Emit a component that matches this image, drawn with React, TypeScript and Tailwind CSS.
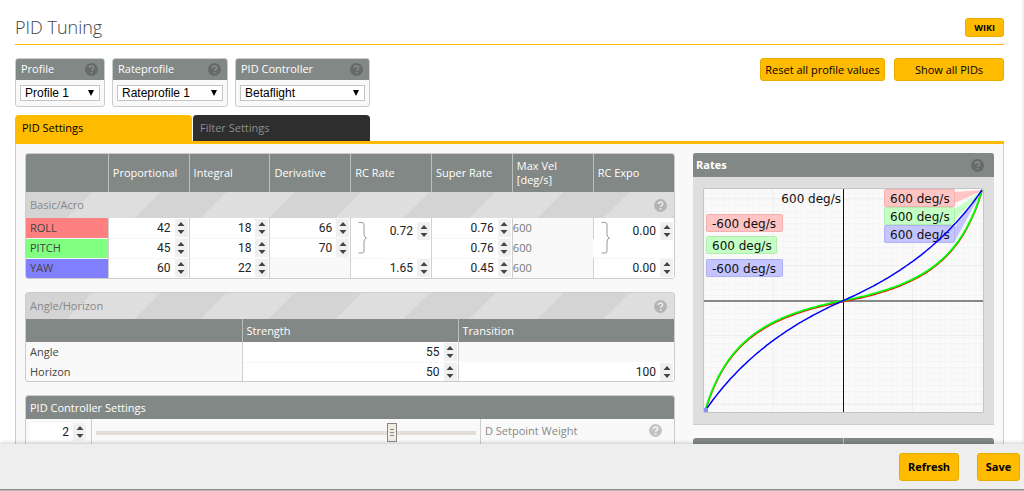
import React from "react";

const cell = "border-r border-[#d0d0d0] last:border-r-0 p-0";
const headCell = "border-r border-[#bdc1be] last:border-r-0 px-1 text-left font-medium text-white align-middle";

function Help({ tone = "text-[#b4b4b4]", mark = "#ececec" }: { tone?: string; mark?: string }) {
  return (
    <button type="button" aria-label="Help" className={"size-[13px] shrink-0 " + tone}>
      <svg viewBox="0 0 12 12" className="size-[13px]">
        <circle cx="6" cy="6" r="6" fill="currentColor" />
        <path d="M4.1 4.7c0-2.6 3.9-2.5 3.9-.2 0 1.3-1.9 1.4-1.9 2.7" fill="none" stroke={mark} strokeWidth="1.4" />
        <circle cx="6.1" cy="9.1" r=".9" fill={mark} />
      </svg>
    </button>
  );
}

function NumberField({ label, value, step = "1" }: { label: string; value: string; step?: string }) {
  return (
    <div className="flex h-[18px] min-w-0 flex-1 bg-white pr-px">
      <input
        type="number"
        aria-label={label}
        defaultValue={value}
        step={step}
        className="w-full min-w-0 flex-1 bg-transparent pr-1 text-right font-[Roboto,sans-serif] text-[12px] leading-[18px] text-[#222] outline-none [appearance:textfield] [&::-webkit-inner-spin-button]:appearance-none"
      />
      <span className="flex w-[13px] items-center justify-center bg-[#f0f0f0]">
        <svg viewBox="0 0 8 14" className="h-[14px] w-2" fill="#444">
          <path d="M4 1 7.500 5H.5zM4 13 .5 9h7z" />
        </svg>
      </span>
    </div>
  );
}

function Brace() {
  return (
    <svg viewBox="0 0 9 32" className="h-8 w-[9px] shrink-0" fill="none" stroke="#999" strokeWidth="1">
      <path d="M.5 .5H4q2 0 2 2v9.500q0 3.500 2.500 4Q6 16.500 6 20v9q0 2-2 2H.5" />
    </svg>
  );
}

function Picker({ id, label, option, width }: { id: string; label: string; option: string; width: string }) {
  return (
    <div className={"overflow-hidden rounded-[3px] border border-[#ccc] bg-[#f9f9f9] " + width}>
      <div className="flex h-[21px] items-center justify-between bg-[#828885] pl-[5px] pr-[6px] text-white">
        <label htmlFor={id} className="pb-[2px] font-medium">{label}</label>
        <Help tone="text-[#666b68]" mark="#8b908d" />
      </div>
      <div className="relative px-1 py-[5px]">
        <select
          id={id}
          className="block h-4 w-full appearance-none border border-[#c4c4c4] bg-white pl-1 font-[Liberation_Sans,Arial,sans-serif] text-[12px] leading-[14px] text-black"
        >
          <option>{option}</option>
        </select>
        <svg viewBox="0 0 6 6" className="pointer-events-none absolute right-[10px] top-[10px] size-[6px]">
          <path d="M0 0h6L3 6z" fill="#000" />
        </svg>
      </div>
    </div>
  );
}

const yellowButton = "rounded-[3px] border border-[#e8ab00] bg-[#ffbb00] text-black";

function StripeCell({ title, span }: { title: string; span: number }) {
  return (
    <th
      colSpan={span}
      className="h-[26px] bg-[repeating-linear-gradient(135deg,#d4d4d4_0px,#d4d4d4_47px,#dedede_47px,#dedede_95px)] p-0 pl-1 pr-[7px] text-left font-normal text-[#888]"
    >
      <div className="flex items-center justify-between">
        <span>{title}</span>
        <Help />
      </div>
    </th>
  );
}

const pidRows = [
  { name: "ROLL", color: "bg-[#ff8080]", p: "42", i: "18", d: "66", rate: "0.72", sup: "0.76", expo: "0.00", span: 2 },
  { name: "PITCH", color: "bg-[#80ff80]", p: "45", i: "18", d: "70", rate: "", sup: "0.76", expo: "", span: 0 },
  { name: "YAW", color: "bg-[#8080ff]", p: "60", i: "22", d: "", rate: "1.65", sup: "0.45", expo: "0.00", span: 1 },
];

function RateCell({ row, label, value }: { row: { name: string; span: number }; label: string; value: string }) {
  if (row.span === 0) return null;
  return (
    <td rowSpan={row.span} className={cell + " bg-white align-top"}>
      <div className={row.span === 2 ? "flex gap-1 pl-[7px] pt-1" : "flex"}>
        {row.span === 2 && <Brace />}
        <NumberField label={row.name + " " + label} value={value} step="0.01" />
      </div>
    </td>
  );
}

function PidTable() {
  return (
    <div className="overflow-hidden rounded-[3px] border border-[#ccc]">
      <table className="w-full table-fixed border-collapse">
        <colgroup>
          <col className="w-[12.7%]" />
          <col /><col /><col /><col /><col /><col /><col />
        </colgroup>
        <thead>
          <tr className="h-[38px] bg-[#828885]">
            {["", "Proportional", "Integral", "Derivative", "RC Rate", "Super Rate", "Max Vel [deg/s]", "RC Expo"].map((h) => (
              <th key={h} className={headCell}>{h}</th>
            ))}
          </tr>
          <tr><StripeCell title="Basic/Acro" span={8} /></tr>
        </thead>
        <tbody>
          {pidRows.map((r) => (
            <tr key={r.name} className="h-5 border-b border-[#f6f6f6] last:border-b-0">
              <th className={"border-r border-[#d0d0d0] p-0 pl-1 text-left font-normal text-[#444] " + r.color}>{r.name}</th>
              <td className={cell + " bg-white"}><NumberField label={r.name + " proportional"} value={r.p} /></td>
              <td className={cell + " bg-white"}><NumberField label={r.name + " integral"} value={r.i} /></td>
              <td className={cell}>{r.d && <NumberField label={r.name + " derivative"} value={r.d} />}</td>
              <RateCell row={r} label="RC rate" value={r.rate} />
              <td className={cell + " bg-white"}><NumberField label={r.name + " super rate"} value={r.sup} step="0.01" /></td>
              <td className={cell + " text-[#777]"}>600</td>
              <RateCell row={r} label="RC expo" value={r.expo} />
            </tr>
          ))}
        </tbody>
      </table>
    </div>
  );
}

function AngleTable() {
  return (
    <div className="overflow-hidden rounded-[3px] border border-[#ccc]">
      <table className="w-full table-fixed border-collapse">
        <thead>
          <tr><StripeCell title="Angle/Horizon" span={3} /></tr>
          <tr className="h-[23px] bg-[#828885]">
            <th className={headCell} />
            <th className={headCell}>Strength</th>
            <th className={headCell}>Transition</th>
          </tr>
        </thead>
        <tbody>
          <tr className="h-5">
            <th className={cell + " pl-1 text-left font-normal"}>Angle</th>
            <td className={cell + " border-b border-b-[#f6f6f6] bg-white"}><NumberField label="Angle strength" value="55" /></td>
            <td className={cell} />
          </tr>
          <tr className="h-[19px]">
            <th className={cell + " pl-1 text-left font-normal"}>Horizon</th>
            <td className={cell + " bg-white"}><NumberField label="Horizon strength" value="50" /></td>
            <td className={cell + " bg-white"}><NumberField label="Horizon transition" value="100" /></td>
          </tr>
        </tbody>
      </table>
    </div>
  );
}

function ControllerSettings() {
  return (
    <div className="overflow-hidden rounded-[3px] border border-[#ccc]">
      <h2 className="flex h-[23px] items-center bg-[#828885] px-1 font-medium text-white">PID Controller Settings</h2>
      <div className="flex h-10 items-stretch">
        <div className="flex w-[66px] border-r border-[#ccc] pl-1 pr-[4px] pt-1">
          <NumberField label="D Setpoint Weight value" value="2" step="0.01" />
        </div>
        <div className="flex-1 border-r border-[#ccc] px-1 pt-1">
          <input
            id="setpoint"
            type="range"
            min="0"
            max="2.54"
            step="0.01"
            defaultValue="2"
            className="block h-[19px] w-full appearance-none bg-transparent [&::-webkit-slider-runnable-track]:h-[4px] [&::-webkit-slider-runnable-track]:bg-[#e2ddd7] [&::-webkit-slider-thumb]:-mt-2 [&::-webkit-slider-thumb]:h-[19px] [&::-webkit-slider-thumb]:w-[10px] [&::-webkit-slider-thumb]:appearance-none [&::-webkit-slider-thumb]:border [&::-webkit-slider-thumb]:border-[#8d8680] [&::-webkit-slider-thumb]:bg-[linear-gradient(#8d8680,#8d8680),linear-gradient(#8d8680,#8d8680),linear-gradient(#8d8680,#8d8680),linear-gradient(#f0ece6,#f0ece6)] [&::-webkit-slider-thumb]:bg-[length:4px_1px,4px_1px,4px_1px,100%_100%] [&::-webkit-slider-thumb]:bg-[position:center_5px,center_8px,center_11px,center] [&::-webkit-slider-thumb]:bg-no-repeat"
          />
        </div>
        <div className="flex w-[193px] items-start justify-between pl-1 pr-3 pt-[5px] text-[#888]">
          <label htmlFor="setpoint">D Setpoint Weight</label>
          <Help tone="text-[#c4c4c4]" mark="#f5f5f5" />
        </div>
      </div>
    </div>
  );
}

function curve(superRate: number, dy: number) {
  const points: string[] = [];
  for (let n = -70; n <= 70; n++) {
    const x = n / 70;
    const y = (x * (1 - superRate)) / (1 - superRate * Math.abs(x));
    points.push(`${(139.5 + x * 138.5).toFixed(1)},${(111.5 - y * 110.5 + dy).toFixed(1)}`);
  }
  return points.join(" ");
}

const balloons = [
  { x: 180, y: 0, w: 71, fill: "#ffc4c4", edge: "#f5b0b0", text: "600 deg/s", tail: "M251 3 279 1 251 14z" },
  { x: 180, y: 18, w: 71, fill: "#c4ffc4", edge: "#b0efb0", text: "600 deg/s", tail: "M251 20 278 2 251 31z" },
  { x: 180, y: 36, w: 71, fill: "#c4c4ff", edge: "#b0b0f5", text: "600 deg/s", tail: "M251 38 278 2 251 52z" },
  { x: 2, y: 25, w: 77, fill: "#ffc4c4", edge: "#f5b0b0", text: "-600 deg/s", tail: "" },
  { x: 2, y: 47, w: 71, fill: "#c4ffc4", edge: "#b0efb0", text: "600 deg/s", tail: "" },
  { x: 2, y: 70, w: 77, fill: "#c4c4ff", edge: "#b0b0f5", text: "-600 deg/s", tail: "" },
];

function RatesChart() {
  const cols = Array.from({ length: 47 }, (_, i) => i * 6 + 1.5);
  const rows = Array.from({ length: 37 }, (_, i) => i * 6 + 4.5);
  return (
    <svg viewBox="0 0 279 223" className="block w-full bg-[#fafafa] font-[DejaVu_Sans,Verdana,sans-serif] text-[12px]">
      {cols.map((x) => <path key={x} d={`M${x} 0V223`} stroke="#f5f5f5" />)}
      {rows.map((y) => <path key={y} d={`M0 ${y}H279`} stroke="#f5f5f5" />)}
      <path d="M69.500 0V223M208.500 0V223M0 76.500H279M0 146.500H279M0 9.500H279M0 215.500H279" stroke="#eee" />
      <path d="M0 112H279" stroke="#888" strokeWidth="2" />
      <path d="M139.500 0V223" stroke="#111" />
      <text x="137" y="14" textAnchor="end" fill="#111">600 deg/s</text>
      {balloons.map((b, i) => (
        <g key={i}>
          {b.tail && <path d={b.tail} fill={b.fill} />}
          <rect x={b.x + 0.5} y={b.y + 0.5} width={b.w - 1} height="17" rx="1" fill={b.fill} stroke={b.edge} />
          <text x={b.x + 6} y={b.y + 14} fill="#111">{b.text}</text>
        </g>
      ))}
      <polyline points={curve(0.76, 1)} fill="none" stroke="#f00" strokeWidth="1.500" />
      <polyline points={curve(0.76, 0)} fill="none" stroke="#0f0" strokeWidth="1.800" />
      <polyline points={curve(0.45, 0)} fill="none" stroke="#00f" strokeWidth="1.500" />
      <rect x="0" y="219" width="4" height="4" fill="#8c8cff" />
    </svg>
  );
}

export default function App() {
  return (
    <div className="flex h-screen flex-col overflow-hidden bg-white font-['Open_Sans',sans-serif] text-[11px] leading-[14px] text-[#444]">
      <main className="min-h-0 flex-1 overflow-hidden border-r-2 border-[#f2f2f2] pl-[15px] pr-[18px]">
        <header className="flex h-[45px] items-end justify-between border-b border-[#ffbb00] pb-[7px]">
          <h1 className="text-[18px] font-light leading-[20px] text-[#444]">PID Tuning</h1>
          <a href="#wiki" className={yellowButton + " flex h-[19px] items-center px-2 text-[9px] font-bold"}>WIKI</a>
        </header>

        <div className="flex items-start justify-between pt-[13px]">
          <div className="flex gap-[7px]">
            <Picker id="profile" label="Profile" option="Profile 1" width="w-[90px]" />
            <Picker id="rateprofile" label="Rateprofile" option="Rateprofile 1" width="w-[116px]" />
            <Picker id="controller" label="PID Controller" option="Betaflight" width="w-[135px]" />
          </div>
          <div className="flex gap-[9px] font-medium">
            <button type="button" className={yellowButton + " h-[23px] w-[125px] whitespace-nowrap"}>Reset all profile values</button>
            <button type="button" className={yellowButton + " h-[23px] w-[110px]"}>Show all PIDs</button>
          </div>
        </div>

        <nav className="mt-2 flex border-b-[3px] border-[#ffbb00] font-medium">
          <button type="button" className="h-[26px] w-[177px] rounded-t-[4px] bg-[#ffbb00] px-[7px] text-left text-black">PID Settings</button>
          <button type="button" className="h-[26px] w-[178px] rounded-t-[4px] border-l border-white bg-[#2e2e2e] px-[7px] text-left text-[#8c8c8c]">Filter Settings</button>
        </nav>

        <section className="grid grid-cols-[650fr_301fr] items-start gap-[18px] border-x border-[#ccc] bg-[#f9f9f9] px-[9px] pb-4 pt-[9px]">
          <div className="flex min-w-0 flex-col gap-[13px]">
            <PidTable />
            <AngleTable />
            <ControllerSettings />
          </div>
          <div className="flex min-w-0 flex-col gap-[13px]">
            <div className="border-b border-[#ccc] bg-[#dedede]">
              <div className="flex h-6 items-center justify-between rounded-t-[3px] bg-[#828885] pl-[3px] pr-[10px] font-bold text-white">
                <h2>Rates</h2>
                <Help tone="text-[#666b68]" mark="#8b908d" />
              </div>
              <div className="px-[10px] py-[11px]">
                <div className="overflow-hidden rounded-[2px] border border-[#c4c4c4]"><RatesChart /></div>
              </div>
            </div>
            <div className="grid h-8 grid-cols-2 overflow-hidden rounded-t-[3px] bg-[#828885]">
              <div className="border-r border-[#bdc1be]" />
            </div>
          </div>
        </section>
      </main>

      <footer className="relative flex h-[47px] shrink-0 flex-col bg-[#eee] text-black shadow-[0_-1px_4px_rgba(0,0,0,0.2)]">
        <div className="flex flex-1 items-center justify-end gap-[18px] border-b border-[#8f8f8a] px-1">
          <button type="button" className={yellowButton + " h-7 w-[60px] font-bold"}>Refresh</button>
          <button type="button" className={yellowButton + " h-7 w-[43px] font-bold"}>Save</button>
        </div>
        <div className="h-px bg-[#b8b7ae]" />
      </footer>
    </div>
  );
}
